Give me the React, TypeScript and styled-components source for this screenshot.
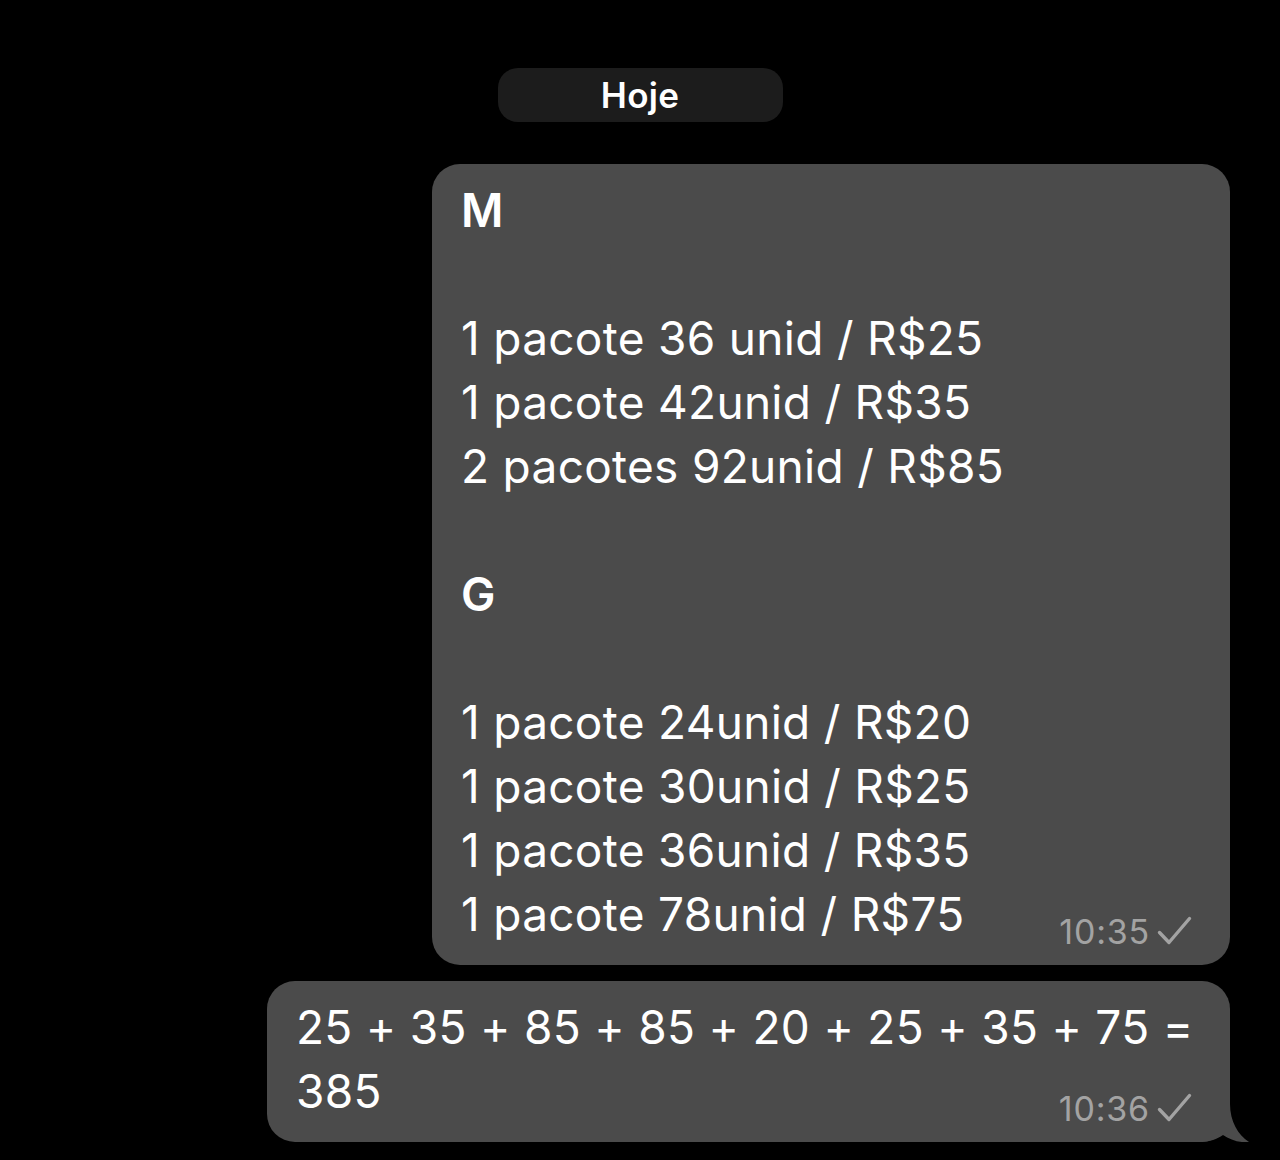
import React from 'react';
import styled, { createGlobalStyle } from 'styled-components';

const GlobalStyle = createGlobalStyle`
    html, body {
        margin: 0;
        padding: 0;
        background: #000;
    }
    body {
        font-family: Inter, "Noto Sans", "Liberation Sans", sans-serif;
        color: #fff;
    }
`;

const Page = styled.main`
    width: 1280px;
    height: 1160px;
    box-sizing: border-box;
    padding: 68px 50px 0 0;
    display: flex;
    flex-direction: column;
    overflow: hidden;
`;

const DateRow = styled.div`
    display: flex;
    justify-content: center;
    padding-left: 50px;
    margin-bottom: 42px;
`;

const DatePill = styled.div`
    width: 285px;
    height: 54px;
    border-radius: 20px;
    background: #1c1c1c;
    display: flex;
    align-items: center;
    justify-content: center;
    font-size: 35px;
    font-weight: 600;
    letter-spacing: 0.3px;
`;

const Messages = styled.div`
    display: flex;
    flex-direction: column;
    align-items: flex-end;
    gap: 16px;
`;

interface BubbleProps {
    $width: number;
}

const Bubble = styled.div<BubbleProps>`
    position: relative;
    width: ${props => props.$width}px;
    box-sizing: border-box;
    padding: 14px 38px 16px 29px;
    background: #4b4b4b;
    border-radius: 28px;
    display: flex;
    flex-direction: column;
`;

interface LineProps {
    $bold?: boolean;
}

const Line = styled.div<LineProps>`
    width: fit-content;
    min-height: 64px;
    font-size: 46px;
    line-height: 64px;
    white-space: pre;
    letter-spacing: 0.3px;
    font-weight: ${props => (props.$bold ? 600 : 400)};
`;

const Meta = styled.div`
    align-self: flex-end;
    margin-top: -33px;
    height: 36px;
    display: flex;
    align-items: center;
    gap: 7px;
    font-size: 34px;
    letter-spacing: 0.8px;
    color: #a3a3a3;
`;

const Tail = styled.svg`
    position: absolute;
    right: -22px;
    bottom: 0;
    width: 52px;
    height: 51px;
`;

function Check() {
    return (
        <svg width="35" height="30" viewBox="0 0 35 30" fill="none">
            <path d="M2.5 16.5 L12 26.5 L32.5 2.5" stroke="#a3a3a3" strokeWidth="3.4" strokeLinecap="round" strokeLinejoin="round" />
        </svg>
    );
}

const priceList = [
    { text: 'M', bold: true },
    { text: '' },
    { text: '1 pacote 36 unid / R$25' },
    { text: '1 pacote 42unid / R$35' },
    { text: '2 pacotes 92unid / R$85' },
    { text: '' },
    { text: 'G', bold: true },
    { text: '' },
    { text: '1 pacote 24unid / R$20' },
    { text: '1 pacote 30unid / R$25' },
    { text: '1 pacote 36unid / R$35' },
    { text: '1 pacote 78unid / R$75' },
];

const sumLines = ['25 + 35 + 85 + 85 + 20 + 25 + 35 + 75 =', '385'];

export default function App(): JSX.Element {
    return (
        <>
            <GlobalStyle />
            <Page>
                <DateRow>
                    <DatePill>Hoje</DatePill>
                </DateRow>
                <Messages>
                    <Bubble $width={798}>
                        {priceList.map((line, i) => (
                            <Line key={i} $bold={line.bold}>{line.text}</Line>
                        ))}
                        <Meta>10:35 <Check /></Meta>
                    </Bubble>
                    <Bubble $width={963}>
                        {sumLines.map((line, i) => (
                            <Line key={i}>{line}</Line>
                        ))}
                        <Meta>10:36 <Check /></Meta>
                        <Tail viewBox="0 0 52 51">
                            <path d="M0 0 H30 V13 C30 30 38 44 49 51 C40 52 30 49 23 44 C17 48 10 51 0 51 Z" fill="#4b4b4b" />
                        </Tail>
                    </Bubble>
                </Messages>
            </Page>
        </>
    );
}
